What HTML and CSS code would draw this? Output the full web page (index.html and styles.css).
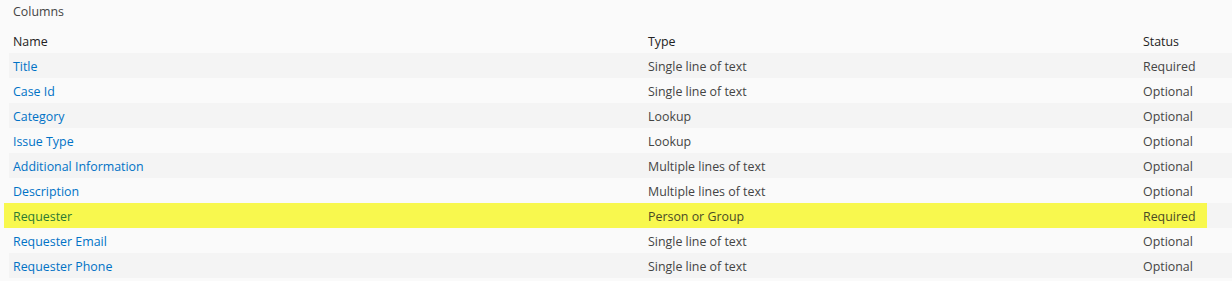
FILE: index.html
```html
<!DOCTYPE html>
<html lang="en">
<head>
<meta charset="utf-8">
<title>Columns</title>
<link rel="stylesheet" href="styles.css">
</head>
<body>
<div class="page">
  <div class="section-title">Columns</div>
  <div class="table">
    <div class="row head">
      <div class="cell name">Name</div>
      <div class="cell type">Type</div>
      <div class="cell status">Status</div>
    </div>
    <div class="row alt">
      <a class="cell name link">Title</a>
      <div class="cell type">Single line of text</div>
      <div class="cell status">Required</div>
    </div>
    <div class="row">
      <a class="cell name link">Case Id</a>
      <div class="cell type">Single line of text</div>
      <div class="cell status">Optional</div>
    </div>
    <div class="row alt">
      <a class="cell name link">Category</a>
      <div class="cell type">Lookup</div>
      <div class="cell status">Optional</div>
    </div>
    <div class="row">
      <a class="cell name link">Issue Type</a>
      <div class="cell type">Lookup</div>
      <div class="cell status">Optional</div>
    </div>
    <div class="row alt">
      <a class="cell name link">Additional Information</a>
      <div class="cell type">Multiple lines of text</div>
      <div class="cell status">Optional</div>
    </div>
    <div class="row">
      <a class="cell name link">Description</a>
      <div class="cell type">Multiple lines of text</div>
      <div class="cell status">Optional</div>
    </div>
    <div class="row alt highlighted">
      <a class="cell name link">Requester</a>
      <div class="cell type">Person or Group</div>
      <div class="cell status">Required</div>
    </div>
    <div class="row">
      <a class="cell name link">Requester Email</a>
      <div class="cell type">Single line of text</div>
      <div class="cell status">Optional</div>
    </div>
    <div class="row alt">
      <a class="cell name link">Requester Phone</a>
      <div class="cell type">Single line of text</div>
      <div class="cell status">Optional</div>
    </div>
  </div>
</div>
</body>
</html>
```

FILE: styles.css
```css
html, body {
  margin: 0;
  padding: 0;
  background: #fafafa;
}

body {
  font-family: "Open Sans", "Noto Sans", sans-serif;
  font-size: 12.4px;
  color: #444444;
  overflow: hidden;
}

.page {
  padding-left: 9px;
  width: 1240px;
}

.section-title {
  height: 24px;
  line-height: 24px;
  margin-bottom: 4px;
  padding-left: 4px;
  color: #444444;
}

.table {
  display: flex;
  flex-direction: column;
}

.row {
  display: grid;
  grid-template-columns: 635px 495px 1fr;
  height: 25px;
  align-items: center;
  position: relative;
}

.row.alt {
  background: #f4f4f4;
}

.row.head .cell {
  color: #222222;
}

.cell {
  position: relative;
  z-index: 1;
  padding-left: 4px;
  padding-top: 1px;
  white-space: nowrap;
}

.link {
  color: #0072c6;
  text-decoration: none;
}

.highlighted::before {
  content: "";
  position: absolute;
  top: 0;
  bottom: 0;
  left: -5px;
  width: 1203px;
  background: #f8f84e;
  z-index: 0;
}

.highlighted .link {
  color: #2b7a34;
}

.highlighted .type,
.highlighted .status {
  color: #4a4a26;
}
```
